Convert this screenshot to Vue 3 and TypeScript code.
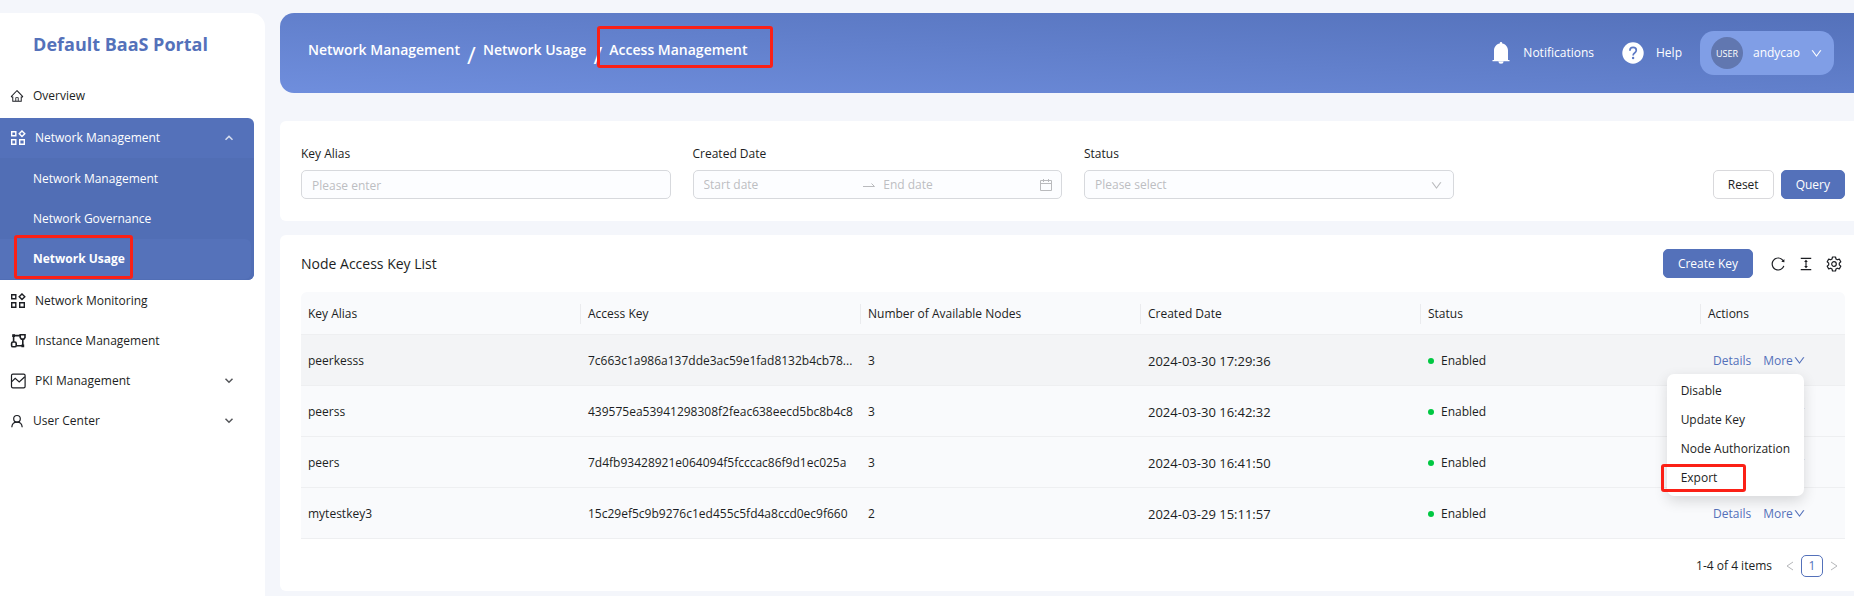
<script setup lang="ts">
import { reactive, ref } from 'vue'

interface MenuItem { label: string; icon: string; arrow?: boolean }
interface AccessKey { alias: string; key: string; nodes: number; created: string }

const subMenu: string[] = ['Network Management', 'Network Governance', 'Network Usage']
const lowerMenu: MenuItem[] = [
  { label: 'Network Monitoring', icon: 'apps' },
  { label: 'Instance Management', icon: 'nodes' },
  { label: 'PKI Management', icon: 'chart', arrow: true },
  { label: 'User Center', icon: 'user', arrow: true },
]
const columns: string[] = ['Key Alias', 'Access Key', 'Number of Available Nodes', 'Created Date', 'Status', 'Actions']
const rows: AccessKey[] = [
  { alias: 'peerkesss', key: '7c663c1a986a137dde3ac59e1fad8132b4cb78...', nodes: 3, created: '2024-03-30 17:29:36' },
  { alias: 'peerss', key: '439575ea53941298308f2feac638eecd5bc8b4c8', nodes: 3, created: '2024-03-30 16:42:32' },
  { alias: 'peers', key: '7d4fb93428921e064094f5fcccac86f9d1ec025a', nodes: 3, created: '2024-03-30 16:41:50' },
  { alias: 'mytestkey3', key: '15c29ef5c9b9276c1ed455c5fd4a8ccd0ec9f660', nodes: 2, created: '2024-03-29 15:11:57' },
]
const moreActions: string[] = ['Disable', 'Update Key', 'Node Authorization', 'Export']

const filters = reactive({ alias: '', start: '', end: '', status: '' })
const openRow = ref(0)

function resetFilters(): void {
  Object.assign(filters, { alias: '', start: '', end: '', status: '' })
}
const down = 'M884 256h-75c-5.1 0-9.9 2.5-12.9 6.6L512 654.2 227.9 262.6c-3-4.1-7.8-6.6-12.9-6.6h-75c-6.5 0-10.3 7.4-6.5 12.7l352.6 486.1c12.8 17.6 39 17.6 51.7 0l352.6-486.1c3.9-5.3.1-12.7-6.4-12.7z'
</script>

<template>
  <div class="page">
    <aside class="sidebar">
      <h1 class="brand">Default BaaS Portal</h1>
      <nav class="menu" aria-label="Main">
        <a href="#" class="item">
          <svg class="icon small" viewBox="0 0 1024 1024" fill="currentColor"><path d="M946.5 505L560.1 118.8l-25.9-25.9a31.5 31.5 0 00-44.4 0L77.5 505a63.9 63.9 0 00-18.8 46c.4 35.2 29.7 63.3 64.9 63.3h42.5V940h691.8V614.3h43.4c17.1 0 33.2-6.7 45.3-18.8a63.6 63.6 0 0018.7-45.3c0-17-6.7-33.1-18.8-45.2zM568 868H456V664h112v204zm217.9-325.7V868H632V640c0-22.1-17.9-40-40-40H432c-22.1 0-40 17.9-40 40v228H238.1V542.3h-96l370-369.7 23.1 23.1L882 542.3h-96.1z" /></svg>
          <span>Overview</span>
        </a>
        <div class="group">
          <button type="button" class="item" aria-expanded="true">
            <svg class="icon" viewBox="0 0 16 16" fill="none" stroke="currentColor" stroke-width="1.4"><path d="M1.7 1.7h4.1v4.1H1.7zM1.7 9.7h4.1v4.6H1.7zM9.7 9.7h4.6v4.6H9.7zM12 .9l2.8 2.8L12 6.5 9.2 3.7z" /></svg>
            <span>Network Management</span>
            <svg class="arrow" viewBox="0 0 10 10" fill="none" stroke="currentColor" stroke-width="1.5"><path d="M1.5 6.8 5 3.4l3.5 3.4" /></svg>
          </button>
          <div class="submenu">
            <a v-for="(s, i) in subMenu" :key="s" href="#" class="subitem" :class="{ current: i === 2 }">{{ s }}</a>
          </div>
        </div>
        <a v-for="m in lowerMenu" :key="m.label" href="#" class="item">
          <svg v-if="m.icon === 'apps'" class="icon" viewBox="0 0 16 16" fill="none" stroke="currentColor" stroke-width="1.4"><path d="M1.7 1.7h4.1v4.1H1.7zM1.7 9.7h4.1v4.6H1.7zM9.7 9.7h4.6v4.6H9.7zM12 .9l2.8 2.8L12 6.5 9.2 3.7z" /></svg>
          <svg v-else-if="m.icon === 'nodes'" class="icon" viewBox="0 0 16 16" fill="none" stroke="currentColor" stroke-width="1.6"><path d="M10.200 1.800h4.800v2.600l-1.200 1.700h-2.400l-1.200-1.700zM12.800 6.100v6.700H6.500M10 2.600H3.600v6.200" /><rect x="1.600" y="9" width="4.600" height="4.800" rx="1.400" /><path d="M2.200 1.200h2.800V4H2.200zM11.400 11.400h2.800v2.800h-2.800z" fill="currentColor" stroke="none" /></svg>
          <svg v-else-if="m.icon === 'chart'" class="icon" viewBox="0 0 16 16" fill="none" stroke="currentColor" stroke-width="1.2"><rect x="1.500" y="1.200" width="13.600" height="13.600" rx="1.400" /><path d="m1.8 8.600 3.400-3.300 4 3.600 5.600-5.200" /></svg>
          <svg v-else class="icon small" viewBox="0 0 14 14" fill="none" stroke="currentColor" stroke-width="1.2"><circle cx="7" cy="4.800" r="3.300" /><path d="M1.800 13.200c.2-3 2.200-5 5.200-5s5 2 5.200 5" /></svg>
          <span>{{ m.label }}</span>
          <svg v-if="m.arrow" class="arrow" viewBox="0 0 10 10" fill="none" stroke="currentColor" stroke-width="1.5"><path d="M1.500 2.800 5 6.200l3.500-3.400" /></svg>
        </a>
      </nav>
    </aside>

    <main class="content">
      <header class="topbar">
        <nav class="crumbs" aria-label="Breadcrumb">
          <a href="#">Network Management</a>
          <span class="slash">/</span>
          <a href="#">Network Usage</a>
          <span class="slash">/</span>
          <span class="here">Access Management</span>
        </nav>
        <div class="tools">
          <a href="#" class="tool">
            <svg class="bell" viewBox="0 0 18 22" fill="currentColor"><path d="M9 0a1.2 1.2 0 0 1 1.2 1.4C13.6 2 16 4.900 16 8.400V18h1.500v1.200H.5V18H2V8.400C2 4.900 4.400 2 7.800 1.400A1.200 1.200 0 0 1 9 0zM6.400 19.600h5.200a2.600 2.200 0 0 1-5.200 0z" /></svg>
            <span>Notifications</span>
          </a>
          <a href="#" class="tool">
            <svg class="help" viewBox="0 0 22 22"><circle cx="11" cy="11" r="10.700" fill="#fff" /><path d="M7.900 8.700c0-2 1.300-3.300 3.200-3.300s3.200 1.200 3.200 2.900c0 1.400-.8 2.100-1.700 2.700-1 .7-1.500 1.200-1.500 2.400" fill="none" stroke="#5d79c5" stroke-width="1.700" /><circle cx="11.100" cy="16" r="1.200" fill="#5d79c5" /></svg>
            <span>Help</span>
          </a>
          <button type="button" class="account">
            <span class="avatar">USER</span>
            <span>andycao</span>
            <svg class="caret" viewBox="0 0 1024 1024" fill="currentColor"><path :d="down" /></svg>
          </button>
        </div>
      </header>

      <form class="card filters" @submit.prevent>
        <div class="field">
          <label for="alias">Key Alias</label>
          <input id="alias" v-model="filters.alias" class="box" type="text" placeholder="Please enter" />
        </div>
        <div class="field">
          <label for="start">Created Date</label>
          <div class="box range">
            <input id="start" v-model="filters.start" type="text" placeholder="Start date" />
            <svg class="swap" viewBox="0 0 12 12" fill="none" stroke="currentColor"><path d="M0 7.500h11.500L8.500 4.500" /></svg>
            <input v-model="filters.end" type="text" placeholder="End date" aria-label="End date" />
            <svg class="cal" viewBox="0 0 14 14" fill="none" stroke="currentColor"><path d="M1.500 2.500h11v10h-11zM1.500 5.500h11M4.500 1v3M9.500 1v3" /></svg>
          </div>
        </div>
        <div class="field">
          <label for="status">Status</label>
          <div class="box select">
            <select id="status" v-model="filters.status">
              <option value="" disabled>Please select</option>
              <option>Enabled</option>
            </select>
            <svg class="caret" viewBox="0 0 1024 1024" fill="currentColor"><path :d="down" /></svg>
          </div>
        </div>
        <div class="buttons">
          <button type="button" class="btn" @click="resetFilters">Reset</button>
          <button type="submit" class="btn primary">Query</button>
        </div>
      </form>

      <section class="card list">
        <div class="list-head">
          <h2>Node Access Key List</h2>
          <div class="list-tools">
            <button type="button" class="btn primary">Create Key</button>
            <button type="button" class="glyph" aria-label="Reload"><svg viewBox="0 0 1024 1024" fill="currentColor"><path d="M909.1 209.3l-56.4 44.1C775.8 155.1 656.2 92 521.9 92 290 92 102.3 279.5 102 511.5 101.7 743.7 289.8 932 521.9 932c181.3 0 335.8-115 394.6-276.1 1.5-4.2-.7-8.9-4.9-10.3l-56.7-19.5a8 8 0 00-10.1 4.8c-1.8 5-3.8 10-5.9 14.9-17.3 41-42.1 77.8-73.7 109.4A344.77 344.77 0 01655.9 829c-42.3 17.9-87.4 27-133.8 27-46.5 0-91.5-9.1-133.8-27A341.5 341.5 0 01279 755.2a342.16 342.16 0 01-73.7-109.4c-17.9-42.4-27-87.4-27-133.9s9.1-91.5 27-133.9c17.3-41 42.1-77.8 73.7-109.4 31.6-31.6 68.4-56.4 109.3-73.8 42.3-17.9 87.4-27 133.8-27 46.5 0 91.5 9.1 133.8 27a341.5 341.5 0 01109.3 73.8c9.9 9.9 19.2 20.4 27.8 31.4l-60.2 47a8 8 0 003 14.100l175.600 43c5 1.200 9.900-2.600 9.900-7.700l.8-180.900c-.1-6.600-7.800-10.300-13-6.200z" /></svg></button>
            <button type="button" class="glyph" aria-label="Density"><svg viewBox="0 0 1024 1024" fill="currentColor"><path d="M840 836H184c-4.400 0-8 3.600-8 8v60c0 4.400 3.600 8 8 8h656c4.400 0 8-3.600 8-8v-60c0-4.400-3.600-8-8-8zm0-724H184c-4.400 0-8 3.600-8 8v60c0 4.400 3.600 8 8 8h656c4.400 0 8-3.600 8-8v-60c0-4.400-3.600-8-8-8zM610.800 378c6 0 9.400-7 5.700-11.700L515.700 238.700a7.140 7.140 0 00-11.300 0L403.600 366.300a7.230 7.230 0 005.700 11.700H476v268h-62.800c-6 0-9.400 7-5.700 11.700l100.800 127.500c2.900 3.700 8.500 3.700 11.300 0l100.800-127.500c3.700-4.700.4-11.700-5.700-11.700H548V378h62.800z" /></svg></button>
            <button type="button" class="glyph" aria-label="Settings"><svg viewBox="0 0 16 16" fill="none" stroke="currentColor" stroke-width="1.200" stroke-linejoin="round"><path d="M6.500 1h3l.5 2 1.300.8 2-.7 1.500 2.600-1.500 1.400v1.800l1.500 1.400-1.500 2.600-2-.7-1.300.8-.5 2h-3L6 13l-1.300-.8-2 .7-1.500-2.600 1.500-1.400V7.100L1.200 5.700l1.500-2.600 2 .7L6 3z" /><circle cx="8" cy="8" r="2.300" /></svg></button>
          </div>
        </div>

        <table>
          <thead>
            <tr><th v-for="c in columns" :key="c" scope="col"><span>{{ c }}</span></th></tr>
          </thead>
          <tbody>
            <tr v-for="(r, i) in rows" :key="r.alias" :class="{ hover: i === openRow }">
              <td>{{ r.alias }}</td>
              <td class="key">{{ r.key }}</td>
              <td>{{ r.nodes }}</td>
              <td class="date">{{ r.created }}</td>
              <td><span class="dot"></span>Enabled</td>
              <td class="actions">
                <div class="action-row">
                  <a href="#">Details</a>
                  <button type="button" class="more" @click="openRow = i">More<svg class="caret" viewBox="0 0 1024 1024" fill="currentColor"><path :d="down" /></svg></button>
                  <div v-if="i === openRow" class="dropdown" role="menu">
                    <button v-for="a in moreActions" :key="a" type="button" role="menuitem" :class="{ marked: a === 'Export' }">{{ a }}</button>
                  </div>
                </div>
              </td>
            </tr>
          </tbody>
        </table>

        <nav class="pager" aria-label="Pagination">
          <span>1-4 of 4 items</span>
          <button type="button" class="step" aria-label="Previous"><svg viewBox="0 0 10 10" fill="none" stroke="currentColor"><path d="M8 1 2 5l6 4" /></svg></button>
          <button type="button" class="num">1</button>
          <button type="button" class="step" aria-label="Next"><svg viewBox="0 0 10 10" fill="none" stroke="currentColor"><path d="m2 1 6 4-6 4" /></svg></button>
        </nav>
      </section>
    </main>
  </div>
</template>

<style>
body { margin: 0; background: #f4f6fb; }
</style>

<style scoped>
*, *::after { box-sizing: border-box; }
.page {
  display: flex;
  gap: 15px;
  min-height: 100vh;
  padding-top: 13px;
  background: #f4f6fb;
  color: #1c1e23;
  font-family: "Open Sans", "Noto Sans", sans-serif;
  font-size: 12px;
  line-height: 20px;
}
a { color: inherit; text-decoration: none; }
button, input, select {
  margin: 0;
  padding: 0;
  border: 0;
  background: none;
  color: inherit;
  font: inherit;
  outline: none;
}
svg { display: block; flex: none; }

.sidebar {
  flex: none;
  width: 265px;
  background: #fff;
  border-top-right-radius: 14px;
}
.brand {
  margin: 0 24px 17px 0;
  padding-top: 16px;
  color: #5471ba;
  font-size: 18px;
  font-weight: 700;
  line-height: 30px;
  text-align: center;
}
.menu { padding-right: 11px; }
.item {
  display: flex;
  align-items: center;
  width: 100%;
  height: 40px;
  padding: 0 20px 0 10px;
  gap: 9px;
  text-align: left;
}
.icon { width: 16px; height: 16px; }
.icon.small { width: 14px; height: 14px; }
.arrow { width: 10px; height: 10px; margin-left: auto; opacity: 0.75; }
.group {
  margin: 2px 0 1px;
  border-radius: 0 6px 6px 0;
  background: #5471ba;
  color: #fff;
}
.submenu { padding: 1px 0; border-bottom-right-radius: 6px; background: #516eb5; }
.subitem { display: flex; align-items: center; height: 40px; padding-left: 33px; }
.subitem.current {
  position: relative;
  margin-right: 3px;
  border-radius: 0 6px 6px 0;
  background: #5572ba;
  font-weight: 700;
}
.subitem.current::after {
  content: "";
  position: absolute;
  left: 14px;
  top: -4px;
  width: 119px;
  height: 44px;
  border: 3px solid #fb2016;
  border-radius: 3px;
}

.content { flex: 1; min-width: 0; }
.topbar {
  display: flex;
  align-items: center;
  justify-content: space-between;
  height: 80px;
  padding: 0 20px 0 28px;
  border-radius: 14px 0 0 14px;
  background: linear-gradient(to bottom left, #5471ba 0%, #6f8edd 100%);
  color: #fff;
}
.crumbs { display: flex; align-items: flex-start; height: 26px; font-size: 14px; font-weight: 600; }
.slash { width: 23px; padding-top: 5px; font-size: 24px; font-weight: 400; text-align: center; }
.here { position: relative; }
.here::after {
  content: "";
  position: absolute;
  inset: -14px -25px -8px -12px;
  border: 3px solid #fb2016;
  border-radius: 3px;
}
.tools { display: flex; align-items: center; }
.tool { display: flex; align-items: center; gap: 13px; margin-right: 28px; }
.tool + .tool { margin-right: 18px; gap: 12px; }
.bell { width: 18px; height: 22px; }
.help { width: 22px; height: 22px; }
.account {
  display: flex;
  align-items: center;
  height: 44px;
  padding: 0 11px;
  gap: 10px;
  border-radius: 14px;
  background: #809ee6;
}
.avatar {
  width: 32px;
  height: 32px;
  border-radius: 50%;
  background: #6177b0;
  font-size: 9px;
  line-height: 34px;
  text-align: center;
}
.caret { width: 13px; height: 13px; }

.card { background: #fff; border-radius: 6px 0 0 6px; }
.filters {
  display: grid;
  grid-template-columns: repeat(4, minmax(0, 1fr));
  align-items: end;
  gap: 22px;
  margin-top: 28px;
  padding: 23px 9px 22px 21px;
}
.field { display: flex; flex-direction: column; gap: 6px; }
.box {
  width: 100%;
  height: 29px;
  padding: 1px 10px 0;
  border: 1px solid #d7d9dd;
  border-radius: 5px;
  background: #fcfdff;
}
.range, .select { display: flex; align-items: center; color: #b9babd; }
.range { gap: 8px; padding-right: 8px; }
.range input { flex: 1; min-width: 0; }
input::placeholder { color: #bcbec2; opacity: 1; }
.swap { width: 12px; height: 12px; margin-left: 4px; }
.cal { width: 14px; height: 14px; }
.select select { flex: 1; appearance: none; color: #bcbec2; }
.buttons { display: flex; justify-content: flex-end; gap: 7px; }
.btn {
  height: 29px;
  padding: 0 14px;
  border: 1px solid #d9d9dc;
  border-radius: 5px;
  background: #fff;
}
.btn.primary { border-color: #5471ba; background: #5471ba; color: #fff; }

.list { margin-top: 14px; padding: 14px 9px 14px 21px; }
.list-head { display: flex; align-items: center; justify-content: space-between; margin-bottom: 14px; }
h2 { margin: 0; font-size: 14px; font-weight: 500; }
.list-tools { display: flex; align-items: center; }
.glyph { margin-left: 12px; }
.list-tools .btn { margin-right: 5px; }
.glyph svg { width: 16px; height: 16px; }
.glyph:last-child { margin-right: 3px; }

table { width: 100%; table-layout: fixed; border-collapse: separate; border-spacing: 0; }
th, td { padding: 1px 0 0 7px; border-bottom: 1px solid #eeeff1; text-align: left; }
th {
  height: 43px;
  background: #f9fafc;
  font-weight: 500;
}
th:first-child { border-top-left-radius: 6px; }
th:last-child { width: 144px; border-top-right-radius: 6px; }
th span { display: block; }
th:not(:last-child) span { border-right: 1px solid #eaebee; }
td { height: 51px; background: #f9fafc; }
.hover td { background: #f3f4f6; }
.key { white-space: nowrap; }
.date { font-size: 13px; }
.dot { display: inline-block; width: 6px; height: 6px; margin: 0 7px 1px 0; border-radius: 50%; background: #00c842; }
.action-row { position: relative; display: flex; gap: 12px; padding-left: 5px; color: #5471ba; }
.more { display: flex; align-items: center; }
.dropdown {
  position: absolute;
  z-index: 2;
  top: 23px;
  right: 41px;
  display: flex;
  flex-direction: column;
  padding: 3px 14px;
  border-radius: 7px;
  background: #fff;
  box-shadow: 0 5px 14px rgba(0, 0, 0, 0.14);
  color: #1c1e23;
}
.dropdown button { height: 29px; text-align: left; white-space: nowrap; }
.marked { position: relative; }
.marked::after {
  content: "";
  position: absolute;
  left: -20px;
  top: 0;
  width: 85px;
  height: 28px;
  border: 3px solid #fb2016;
  border-radius: 3px;
}

.pager { display: flex; align-items: center; justify-content: flex-end; gap: 6px; margin-top: 16px; padding-right: 6px; }
.pager > span { margin-right: 7px; }
.step { color: #b5b7ba; }
.step svg { width: 10px; height: 10px; }
.num {
  width: 22px;
  height: 22px;
  border: 1px solid #5471ba;
  border-radius: 5px;
  color: #5471ba;
}
</style>
